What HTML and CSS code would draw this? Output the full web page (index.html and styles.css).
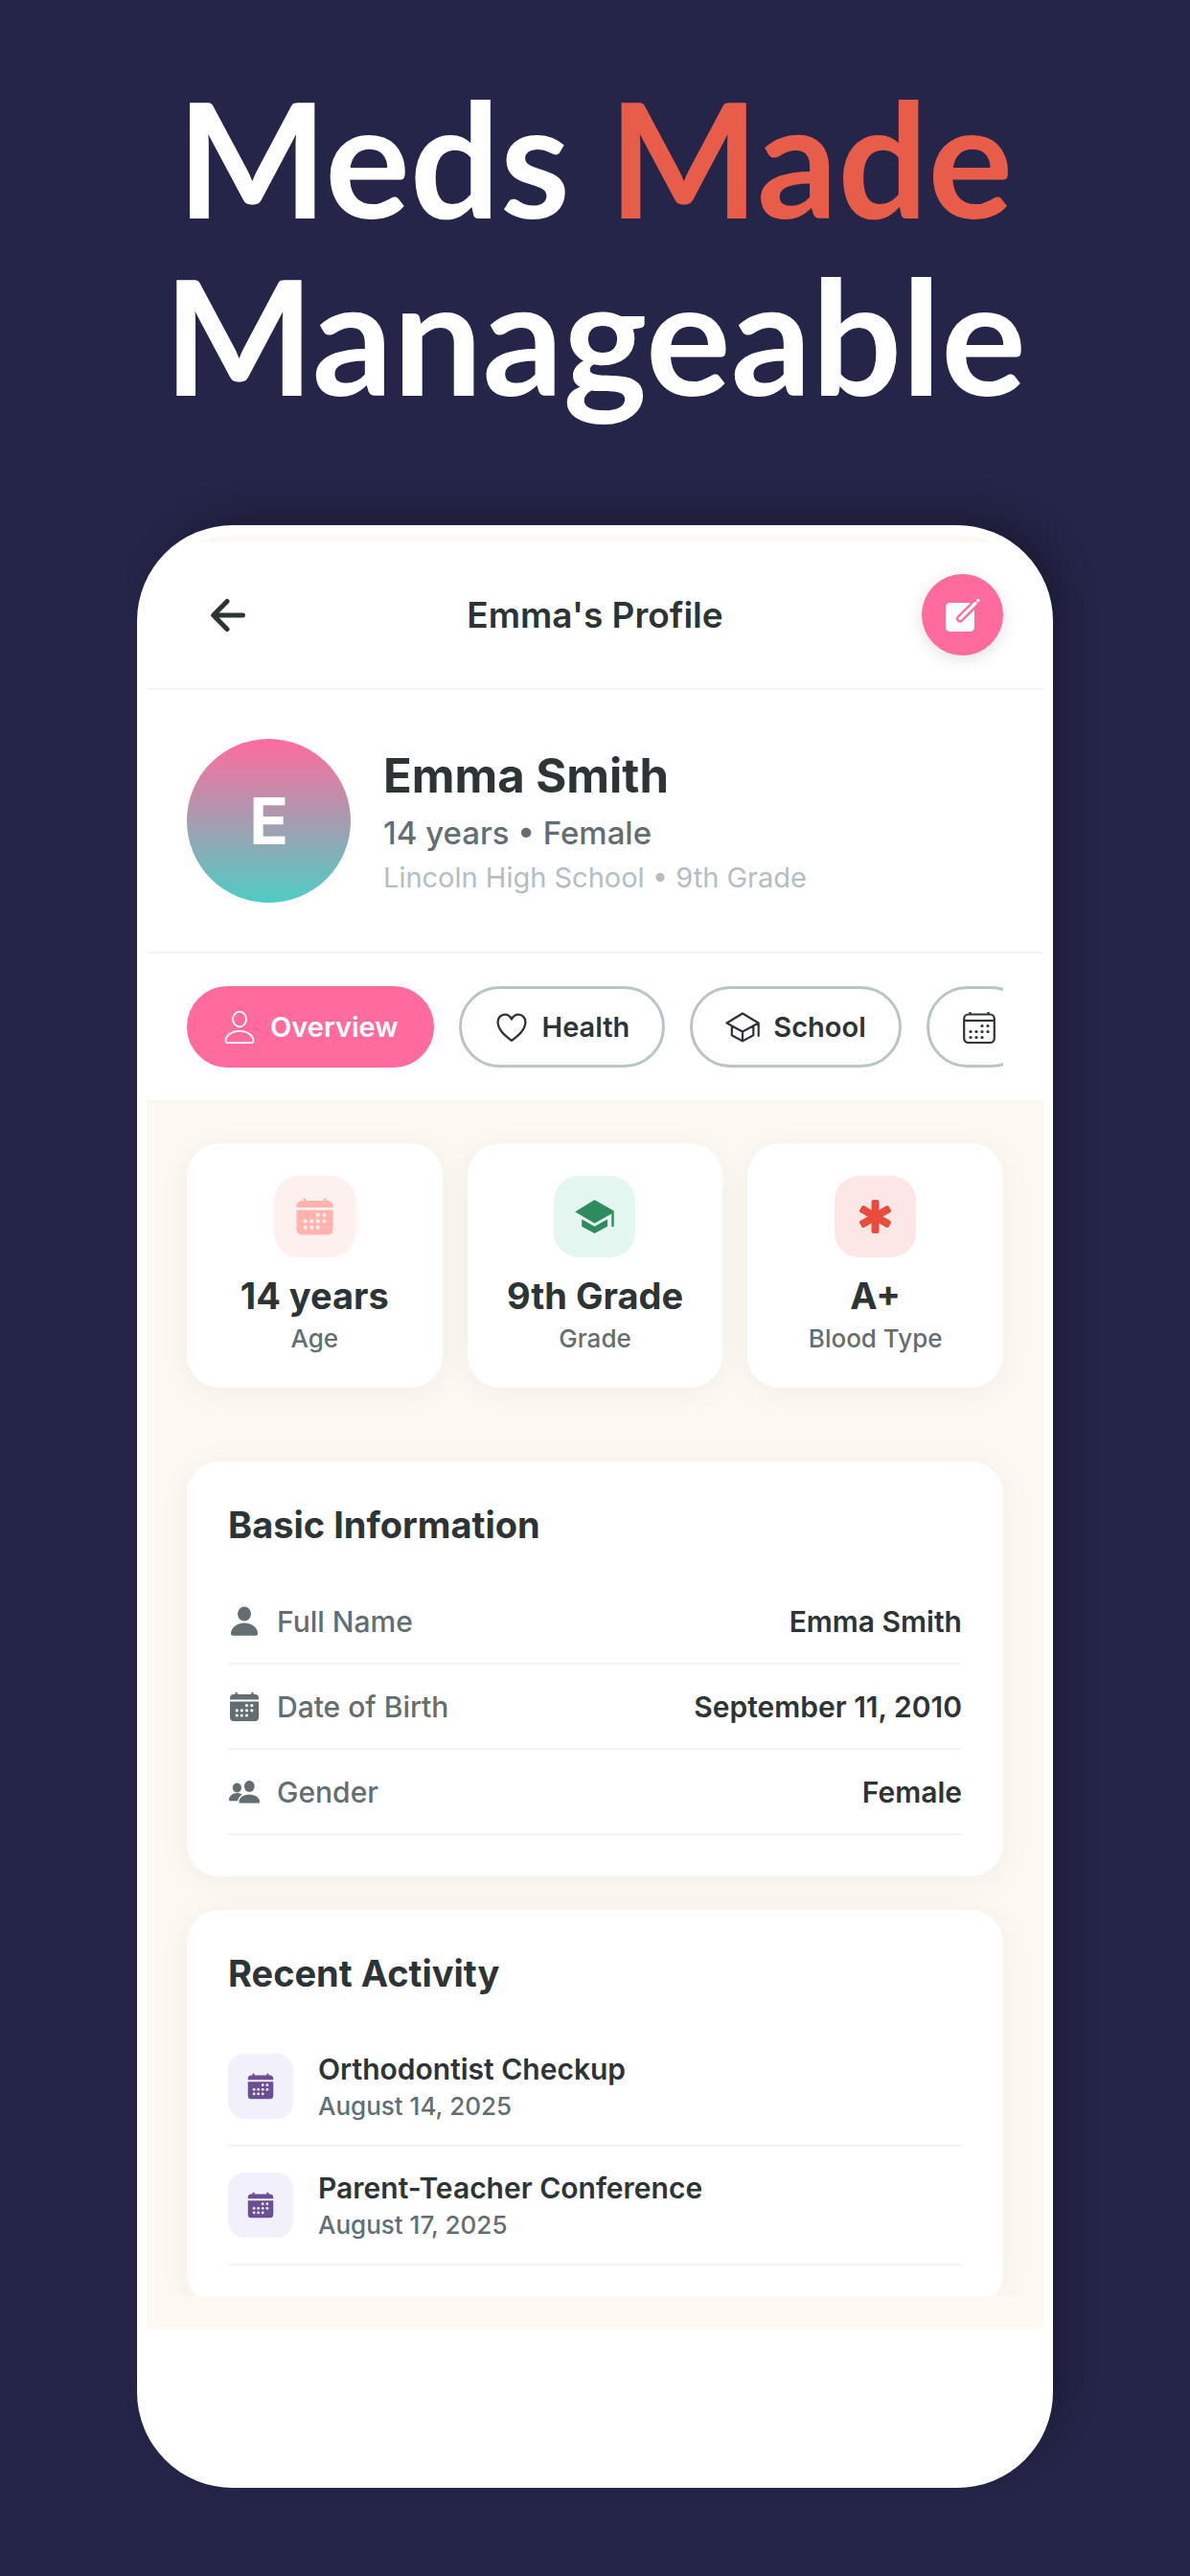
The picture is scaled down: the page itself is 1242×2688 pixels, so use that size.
FILE: index.html
```html
<!DOCTYPE html>
<html lang="en">
<head>
    <meta charset="UTF-8">
    <meta name="viewport" content="width=device-width, initial-scale=1.0">
    <title>Emma's Profile</title>
    <link rel="stylesheet" href="styles.css">
</head>
<body>
    <!-- Shared icons -->
    <svg class="icon-defs" aria-hidden="true">
        <symbol id="calendar-solid" viewBox="0 0 34 34">
            <path fill="currentColor" d="M2 9.4V8a4 4 0 0 1 4-4h1.4V3a1.2 1.2 0 0 1 2.4 0v1h14.4V3a1.2 1.2 0 0 1 2.4 0v1H28a4 4 0 0 1 4 4v1.4zM2 11.6h30V28a4 4 0 0 1-4 4H6a4 4 0 0 1-4-4z"/>
            <g class="holes">
                <circle cx="19.5" cy="15.6" r="1.6"/><circle cx="24.8" cy="15.6" r="1.6"/>
                <circle cx="9.2" cy="20.8" r="1.6"/><circle cx="14.3" cy="20.8" r="1.6"/><circle cx="19.5" cy="20.8" r="1.6"/><circle cx="24.8" cy="20.8" r="1.6"/>
                <circle cx="9.2" cy="26" r="1.6"/><circle cx="14.3" cy="26" r="1.6"/><circle cx="19.5" cy="26" r="1.6"/>
            </g>
        </symbol>
    </svg>

    <h1 class="headline">Meds <span class="accent">Made</span><br>Manageable</h1>

    <main class="phone">
        <div class="screen">
            <header class="header">
                <button class="back-btn" type="button" aria-label="Back">
                    <svg width="36" height="36" viewBox="0 0 36 36" fill="none" stroke="currentColor" stroke-width="5" stroke-linecap="round" stroke-linejoin="round">
                        <path d="M17 3.5 2.7 18 17 32.5M3 18h30.5"/>
                    </svg>
                </button>
                <h2 class="header-title">Emma's Profile</h2>
                <button class="edit-btn" type="button" aria-label="Edit profile">
                    <svg width="43" height="43" viewBox="0 0 43 43" stroke-linecap="round">
                        <rect x="4" y="9" width="30" height="30" rx="4.5" fill="#fff"/>
                        <path d="M19 25.5 37.5 7" stroke="#ff6b9d" stroke-width="8"/>
                        <path d="M19 25.5 35 9.5" stroke="#fff" stroke-width="3.2"/>
                        <circle cx="37.8" cy="6.6" r="1.8" fill="#fff"/>
                    </svg>
                </button>
            </header>

            <section class="profile">
                <div class="avatar">E</div>
                <div class="profile-text">
                    <h3 class="profile-name">Emma Smith</h3>
                    <p class="profile-meta">14 years • Female</p>
                    <p class="profile-school">Lincoln High School • 9th Grade</p>
                </div>
            </section>

            <div class="tabs-wrap">
                <nav class="tabs">
                    <button class="tab active" type="button">
                        <svg width="36" height="36" viewBox="0 0 36 36" fill="none" stroke="currentColor" stroke-width="1.8">
                            <ellipse cx="18" cy="9.5" rx="7" ry="7.8"/>
                            <path d="M3.5 32C3.5 27 9.5 21.8 18 21.8S32.5 27 32.5 32c0 1.6-1 2.2-2.5 2.2H6c-1.5 0-2.5-.6-2.5-2.2z"/>
                        </svg>
                        Overview
                    </button>
                    <button class="tab" type="button">
                        <svg width="36" height="36" viewBox="0 0 36 36" fill="none" stroke="currentColor" stroke-width="2.3" stroke-linejoin="round">
                            <path d="M18 9.500C16.5 6.5 14 4.6 11 4.6c-4.3 0-7.4 3.4-7.4 7.9C3.6 20.500 11 26.5 18 31.800c7-5.3 14.400-11.300 14.400-19.300 0-4.500-3.100-7.900-7.400-7.900-3 0-5.500 1.900-7 4.900z"/>
                        </svg>
                        Health
                    </button>
                    <button class="tab" type="button">
                        <svg width="36" height="36" viewBox="0 0 36 36" fill="none" stroke="currentColor" stroke-width="2.2" stroke-linejoin="round" stroke-linecap="round">
                            <path d="M18 3.5 1.5 13.5 18 22.5l16.7-9zM34.7 13.5V27M6.8 17v9.2L18 32.4l11.3-6.2V17M18 22.5v9.9"/>
                        </svg>
                        School
                    </button>
                    <button class="tab" type="button" aria-label="Calendar">
                        <svg width="36" height="36" viewBox="0 0 36 36" fill="none" stroke="currentColor" stroke-width="2.2">
                            <rect x="2.2" y="4.5" width="31.6" height="29.5" rx="4.5"/>
                            <path d="M2.2 11h31.6"/>
                            <path d="M8.5 2v2.500M27.500 2v2.500"/>
                            <g fill="currentColor" stroke="none">
                                <circle cx="21" cy="16.5" r="1.6"/><circle cx="27" cy="16.5" r="1.6"/>
                                <circle cx="9" cy="22.5" r="1.6"/><circle cx="15" cy="22.5" r="1.6"/><circle cx="21" cy="22.5" r="1.6"/><circle cx="27" cy="22.5" r="1.6"/>
                                <circle cx="9" cy="28.5" r="1.6"/><circle cx="15" cy="28.5" r="1.6"/><circle cx="21" cy="28.5" r="1.6"/>
                            </g>
                        </svg>
                    </button>
                </nav>
            </div>

            <div class="content">
                <div class="stats">
                    <div class="stat">
                        <div class="stat-icon age">
                            <svg width="43" height="43"><use href="#calendar-solid"/></svg>
                        </div>
                        <div class="stat-value">14 years</div>
                        <div class="stat-label">Age</div>
                    </div>
                    <div class="stat">
                        <div class="stat-icon grade">
                            <svg width="43" height="43" viewBox="0 0 43 43" fill="currentColor">
                                <path d="M21.5 4 41.7 15.500V31a1.2 1.2 0 0 1-2.4 0V18.500L21.500 28.500 1.200 16.500z"/>
                                <path d="M8.2 24.2 21.5 31.8 35 24.2v7.500L21.500 39 8.200 31.700z"/>
                            </svg>
                        </div>
                        <div class="stat-value">9th Grade</div>
                        <div class="stat-label">Grade</div>
                    </div>
                    <div class="stat">
                        <div class="stat-icon blood">
                            <svg width="43" height="43" viewBox="0 0 43 43" fill="currentColor">
                                <rect x="17.5" y="4" width="8" height="35" rx="2"/>
                                <rect x="17.5" y="4" width="8" height="35" rx="2" transform="rotate(60 21.5 21.5)"/>
                                <rect x="17.5" y="4" width="8" height="35" rx="2" transform="rotate(120 21.5 21.5)"/>
                            </svg>
                        </div>
                        <div class="stat-value">A+</div>
                        <div class="stat-label">Blood Type</div>
                    </div>
                </div>

                <section class="card">
                    <h3 class="card-title">Basic Information</h3>
                    <dl class="info">
                        <div class="info-row">
                            <dt>
                                <svg width="34" height="34" viewBox="0 0 34 34" fill="currentColor">
                                    <ellipse cx="17" cy="9" rx="7" ry="7.5"/>
                                    <path d="M3 29.5C3 24 9 18.6 17 18.6S31 24 31 29.5c0 1.5-.8 2.2-2.3 2.2H5.3C3.8 31.7 3 31 3 29.5z"/>
                                </svg>
                                Full Name
                            </dt>
                            <dd>Emma Smith</dd>
                        </div>
                        <div class="info-row">
                            <dt>
                                <svg width="34" height="34"><use href="#calendar-solid"/></svg>
                                Date of Birth
                            </dt>
                            <dd>September 11, 2010</dd>
                        </div>
                        <div class="info-row">
                            <dt>
                                <svg width="34" height="34" viewBox="0 0 34 34" fill="currentColor">
                                    <ellipse cx="9.4" cy="12.5" rx="4.6" ry="5"/>
                                    <path d="M1 25c0-3.5 3.5-7 8.4-7 2.2 0 4 .6 5.4 1.6-2.6 1.6-4.3 4-4.8 6.7H2.5C1.5 26.3 1 25.9 1 25z"/>
                                    <ellipse cx="22.3" cy="11" rx="5.4" ry="6"/>
                                    <path d="M11.5 27c0-3.7 4.3-7.5 10.8-7.5S33 23.3 33 27c0 1.1-.6 1.6-1.7 1.6H13.2c-1.1 0-1.7-.5-1.7-1.6z"/>
                                </svg>
                                Gender
                            </dt>
                            <dd>Female</dd>
                        </div>
                    </dl>
                </section>

                <section class="card">
                    <h3 class="card-title">Recent Activity</h3>
                    <ul class="activity">
                        <li class="activity-item">
                            <div class="activity-icon"><svg width="30" height="30"><use href="#calendar-solid"/></svg></div>
                            <div>
                                <div class="activity-name">Orthodontist Checkup</div>
                                <div class="activity-date">August 14, 2025</div>
                            </div>
                        </li>
                        <li class="activity-item">
                            <div class="activity-icon"><svg width="30" height="30"><use href="#calendar-solid"/></svg></div>
                            <div>
                                <div class="activity-name">Parent-Teacher Conference</div>
                                <div class="activity-date">August 17, 2025</div>
                            </div>
                        </li>
                    </ul>
                </section>
            </div>
        </div>
    </main>
</body>
</html>
```

FILE: styles.css
```css
* {
    box-sizing: border-box;
}

body {
    margin: 0;
    padding: 71px 143px 92px;
    background: #252549;
    color: #2d3436;
    font-family: Inter, "Liberation Sans", sans-serif;
}

h1, h2, h3, p, dl, dd, ul {
    margin: 0;
    padding: 0;
}

button {
    font-family: inherit;
    cursor: pointer;
}

svg {
    display: block;
    flex-shrink: 0;
}

.icon-defs {
    position: absolute;
    width: 0;
    height: 0;
}

.holes {
    fill: var(--hole, #fff);
}

.headline {
    margin: 0 -60px 107px;
    font-family: Lato, sans-serif;
    font-size: 166px;
    font-weight: 700;
    line-height: 185px;
    text-align: center;
    color: #fff;
}

.accent {
    color: #e85d4a;
}

.phone {
    display: flex;
    aspect-ratio: 956 / 2048;
    padding: 10px 10px 166px;
    overflow: hidden;
    background: #fff;
    border-radius: 100px;
    box-shadow: 16px -16px 32px rgba(0, 0, 0, 0.22);
}

.screen {
    display: flex;
    flex-direction: column;
    flex: 1;
    min-width: 0;
    padding: 7px 0 34px;
    background: #fdf8f1;
    border-radius: 90px 90px 0 0;
    overflow: hidden;
}

.header {
    display: flex;
    justify-content: space-between;
    align-items: center;
    padding: 34px 42px;
    background: #fff;
    border-bottom: 2px solid #f3f4f5;
}

.header-title {
    font-size: 37px;
    font-weight: 600;
    line-height: 46px;
}

.back-btn, .edit-btn {
    display: flex;
    justify-content: center;
    align-items: center;
    width: 85px;
    height: 85px;
    padding: 0;
    border: none;
    border-radius: 50%;
    background: none;
    color: #2d3436;
}

.edit-btn {
    background: #ff6b9d;
    box-shadow: 0 4px 17px rgba(0, 0, 0, 0.12);
}

.profile {
    display: flex;
    align-items: center;
    gap: 34px;
    padding: 51px 42px;
    background: #fff;
    border-bottom: 2px solid #f3f4f5;
}

.avatar {
    display: flex;
    justify-content: center;
    align-items: center;
    width: 171px;
    height: 171px;
    border-radius: 50%;
    background: linear-gradient(#ff6b9d, #4ecdc4);
    color: #fff;
    font-size: 67px;
    font-weight: 700;
}

.profile-name {
    margin-bottom: 4px;
    font-size: 49px;
    font-weight: 700;
    line-height: 64px;
}

.profile-meta {
    margin-bottom: 4px;
    font-size: 33px;
    font-weight: 500;
    line-height: 46px;
    color: #636e72;
}

.profile-school {
    font-size: 29px;
    line-height: 40px;
    color: #b2bec3;
}

.tabs-wrap {
    padding: 34px 42px;
    background: #fff;
    border-bottom: 2px solid #f8f3ef;
}

.tabs {
    display: flex;
    gap: 26px;
    overflow: hidden;
}

.tab {
    display: flex;
    flex-shrink: 0;
    align-items: center;
    gap: 14px;
    height: 85px;
    padding: 0 34px;
    border: 3px solid #b8c5c8;
    border-radius: 43px;
    background: #fff;
    color: #2d3436;
    font-size: 29px;
    font-weight: 600;
}

.tab.active {
    border-color: #ff6b9d;
    background: #ff6b9d;
    color: #fff;
}

.content {
    flex: 1;
    min-height: 0;
    padding: 43px 42px 0;
    overflow: hidden;
}

.stats {
    display: grid;
    grid-template-columns: repeat(3, 1fr);
    gap: 26px;
    margin-bottom: 77px;
}

.stat {
    display: flex;
    flex-direction: column;
    align-items: center;
    padding: 34px 10px;
    background: #fff;
    border-radius: 34px;
    box-shadow: 0 4px 34px rgba(0, 0, 0, 0.05);
}

.stat-icon {
    display: flex;
    justify-content: center;
    align-items: center;
    width: 85px;
    height: 85px;
    margin-bottom: 17px;
    border-radius: 26px;
}

.stat-icon.age {
    --hole: #fff0f0;
    background: #fff0f0;
    color: #ffb3ad;
}

.stat-icon.grade {
    background: #e3f6ef;
    color: #2e8b5e;
}

.stat-icon.blood {
    background: #fde6e6;
    color: #e74c3c;
}

.stat-value {
    margin-bottom: 4px;
    font-size: 38px;
    font-weight: 700;
    line-height: 46px;
}

.stat-label {
    font-size: 26px;
    font-weight: 500;
    line-height: 35px;
    color: #636e72;
}

.card {
    margin-bottom: 35px;
    padding: 43px;
    background: #fff;
    border-radius: 34px;
    box-shadow: 0 4px 34px rgba(0, 0, 0, 0.05);
}

.card-title {
    margin-bottom: 34px;
    font-size: 38px;
    font-weight: 700;
    line-height: 46px;
}

.info-row {
    display: flex;
    justify-content: space-between;
    align-items: center;
    height: 89px;
    border-bottom: 2px solid #f3f4f5;
    font-size: 30px;
}

.info-row dt {
    display: flex;
    align-items: center;
    gap: 17px;
    font-weight: 500;
    color: #636e72;
}

.info-row dd {
    font-weight: 600;
}

.activity {
    list-style: none;
}

.activity-item {
    display: flex;
    align-items: center;
    gap: 26px;
    padding: 22px 0;
    border-bottom: 2px solid #f3f4f5;
}

.activity-icon {
    --hole: #f2f1fb;
    display: flex;
    justify-content: center;
    align-items: center;
    width: 68px;
    height: 68px;
    border-radius: 17px;
    background: #f2f1fb;
    color: #6b4e93;
}

.activity-name {
    font-size: 30px;
    font-weight: 600;
    line-height: 42px;
}

.activity-date {
    font-size: 26px;
    font-weight: 500;
    line-height: 36px;
    color: #636e72;
}
```
